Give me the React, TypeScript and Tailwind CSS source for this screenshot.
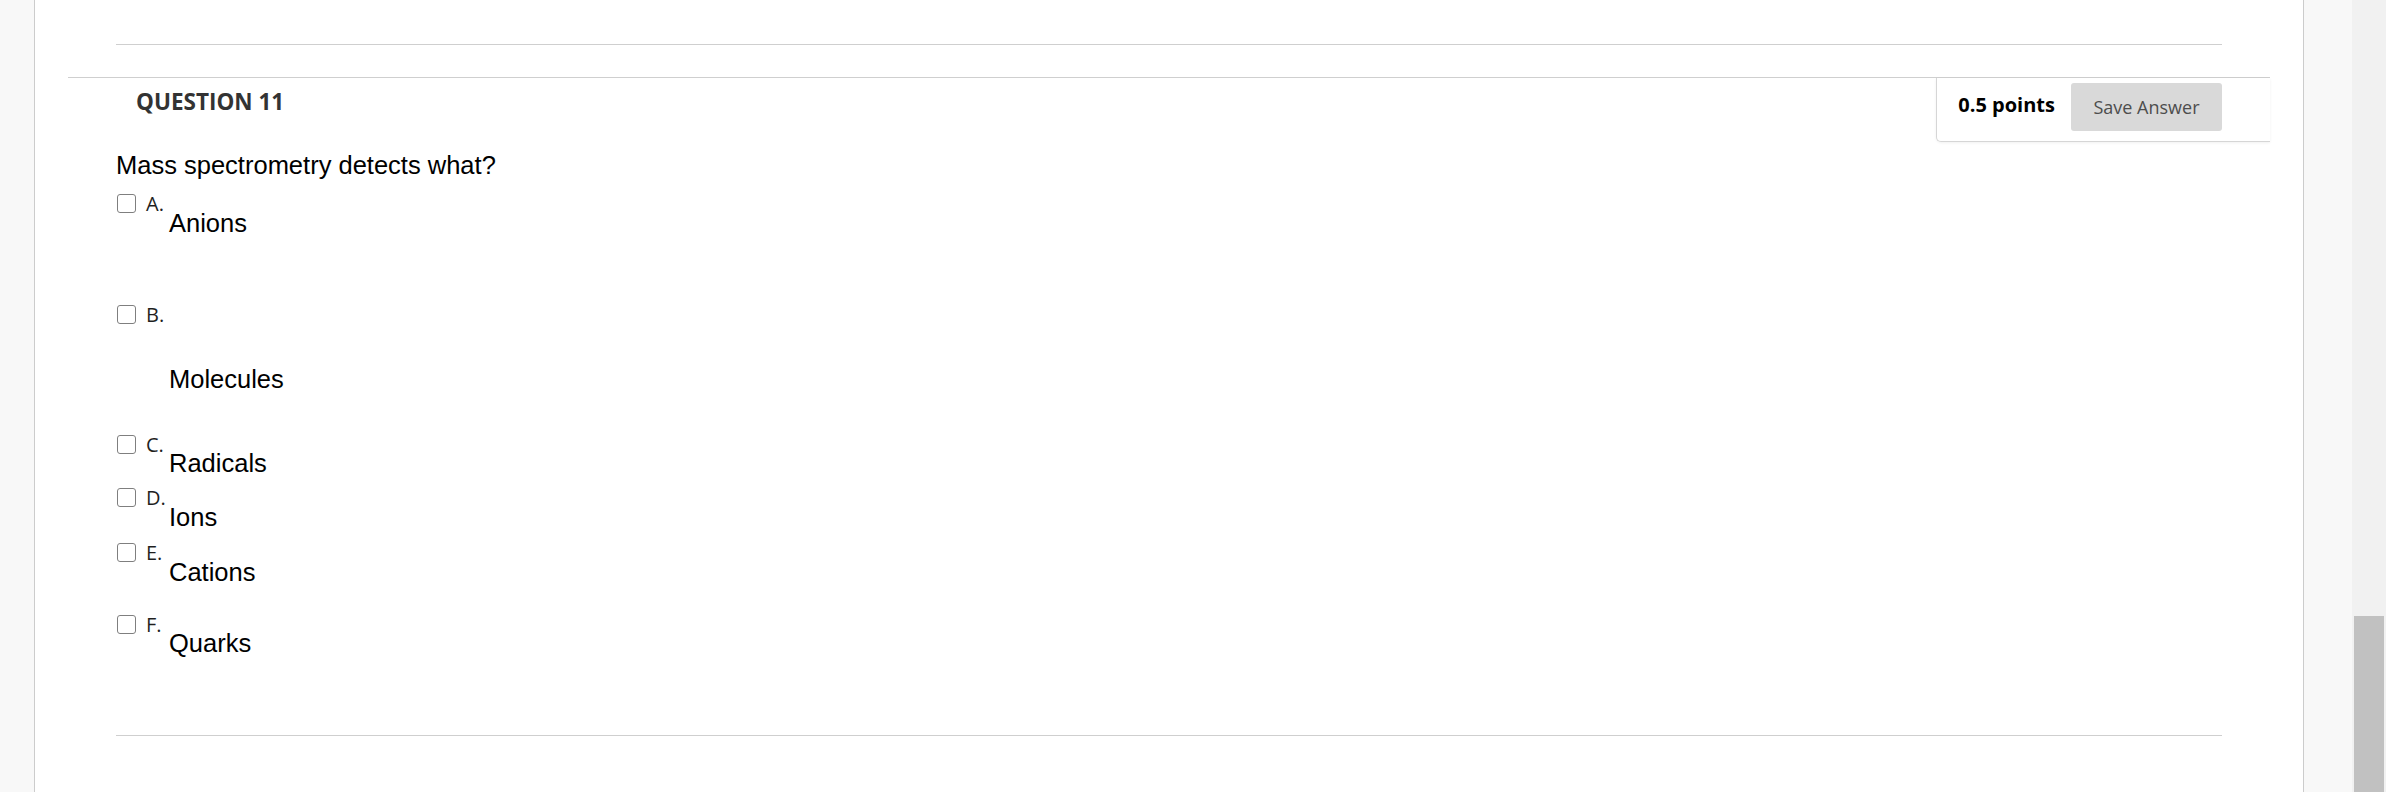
import React from "react";

type Option = {
    letter: string;
    text: string;
    textPad: string;
    gap: string;
};

const options: Option[] = [
    { letter: "A.", text: "Anions", textPad: "pt-[14px]", gap: "mb-[67px]" },
    { letter: "B.", text: "Molecules", textPad: "pt-[59px]", gap: "mb-[41px]" },
    { letter: "C.", text: "Radicals", textPad: "pt-[13px]", gap: "mb-[10px]" },
    { letter: "D.", text: "Ions", textPad: "pt-[14px]", gap: "mb-[11px]" },
    { letter: "E.", text: "Cations", textPad: "pt-[14px]", gap: "mb-[28px]" },
    { letter: "F.", text: "Quarks", textPad: "pt-[13px]", gap: "mb-0" },
];

function AnswerRow({ option }: { option: Option }) {
    return (
        <label className={`flex items-start ${option.gap}`}>
            <span className="ml-[1px] mr-[10px] h-[19px] w-[19px] shrink-0 rounded-[3px] border-[1.5px] border-[#7f7f7f] bg-white" />
            <span className="w-[23px] shrink-0 font-['Open_Sans',sans-serif] text-[20px] leading-[19px] text-[#1f1f1f]">
                {option.letter}
            </span>
            <span className={`${option.textPad} font-['Liberation_Sans',Arial,sans-serif] text-[25.5px] leading-[30px] text-black`}>
                {option.text}
            </span>
        </label>
    );
}

export default function App() {
    return (
        <div className="flex h-[792px] w-full overflow-hidden bg-white">
            <div className="w-[35px] shrink-0 border-r border-[#cccccc] bg-[#f8f8f8]" />

            <main className="min-w-0 flex-1 px-[33px]">
                <div className="mx-[48px] mt-[44px] border-t border-[#cfcfcf]" />

                <section className="mt-[32px] border-t border-[#cfcfcf]">
                    <div className="flex items-start justify-between">
                        <h2 className="pl-[68px] pt-[12px] font-['Open_Sans',sans-serif] text-[22.5px] font-bold leading-[23px] text-[#333333]">
                            QUESTION 11
                        </h2>
                        <div className="flex items-start gap-[16px] rounded-bl-[5px] border-b border-l border-[#d6d6d6] bg-white pb-[10px] pl-[21px] pr-[48px] pt-[5px] shadow-[0_1px_3px_rgba(0,0,0,0.06)]">
                            <span className="mt-[12px] font-['Open_Sans',sans-serif] text-[20px] font-bold leading-[20px] text-black">
                                0.5 points
                            </span>
                            <button
                                type="button"
                                className="flex h-[48px] w-[151px] items-center justify-center rounded-[3px] bg-[#d9d9d9] font-['Open_Sans',sans-serif] text-[18px] leading-[18px] text-[#4d4d4d]"
                            >
                                Save Answer
                            </button>
                        </div>
                    </div>

                    <div className="px-[48px]">
                        <p className="mt-[8px] font-['Liberation_Sans',Arial,sans-serif] text-[25.5px] leading-[30px] text-black">
                            Mass spectrometry detects what?
                        </p>
                        <div className="mt-[14px] flex flex-col">
                            {options.map((o) => (
                                <AnswerRow key={o.letter} option={o} />
                            ))}
                        </div>
                    </div>
                </section>

                <div className="mx-[48px] mt-[77px] border-t border-[#cfcfcf]" />
            </main>

            <div className="w-[49px] shrink-0 border-l border-[#cccccc] bg-[#f8f8f8]" />

            <div className="flex w-[34px] shrink-0 flex-col bg-[#f1f1f1] pt-[616px]">
                <div className="ml-[2px] w-[30px] flex-1 bg-[#c1c1c1]" />
            </div>
        </div>
    );
}
